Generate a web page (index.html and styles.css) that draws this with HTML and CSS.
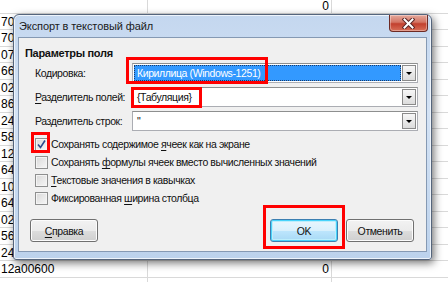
FILE: index.html
```html
<!DOCTYPE html>
<html lang="ru">
<head>
    <meta charset="UTF-8">
    <title>Экспорт в текстовый файл</title>
    <link rel="stylesheet" href="styles.css">
</head>
<body>
    <div class="sheet">
        <div class="row first"><div class="cell a"></div><div class="cell b">0</div><div class="cell c"></div></div>
        <div class="row"><div class="cell a">70a00600</div><div class="cell b"></div><div class="cell c"></div></div>
        <div class="row odd"><div class="cell a">70a00600</div><div class="cell b"></div><div class="cell c"></div></div>
        <div class="row"><div class="cell a">07a00600</div><div class="cell b"></div><div class="cell c"></div></div>
        <div class="row odd"><div class="cell a">66a00600</div><div class="cell b"></div><div class="cell c"></div></div>
        <div class="row"><div class="cell a">02a00600</div><div class="cell b"></div><div class="cell c"></div></div>
        <div class="row odd"><div class="cell a">86a00600</div><div class="cell b"></div><div class="cell c"></div></div>
        <div class="row"><div class="cell a">24a00600</div><div class="cell b"></div><div class="cell c"></div></div>
        <div class="row odd"><div class="cell a">58a00600</div><div class="cell b"></div><div class="cell c"></div></div>
        <div class="row"><div class="cell a">12a00600</div><div class="cell b"></div><div class="cell c"></div></div>
        <div class="row odd"><div class="cell a">64a00600</div><div class="cell b"></div><div class="cell c"></div></div>
        <div class="row"><div class="cell a">10a00600</div><div class="cell b"></div><div class="cell c"></div></div>
        <div class="row odd"><div class="cell a">64a00600</div><div class="cell b"></div><div class="cell c"></div></div>
        <div class="row"><div class="cell a">02a00600</div><div class="cell b"></div><div class="cell c"></div></div>
        <div class="row odd"><div class="cell a">56a00600</div><div class="cell b"></div><div class="cell c"></div></div>
        <div class="row"><div class="cell a">24a00600</div><div class="cell b"></div><div class="cell c"></div></div>
        <div class="row odd"><div class="cell a">12a00600</div><div class="cell b">0</div><div class="cell c"></div></div>
        <div class="row"><div class="cell a"></div><div class="cell b"></div><div class="cell c"></div></div>
    </div>

    <div class="dialog">
        <div class="titlebar">
            <span class="title">Экспорт в текстовый файл</span>
            <button class="close">
                <svg width="13" height="11" viewBox="0 0 13 11">
                    <path d="M2.5 1.5 L10.5 9.5 M10.5 1.5 L2.5 9.5" stroke="#5a2525" stroke-width="4" stroke-linecap="square"/>
                    <path d="M2.5 1.5 L10.5 9.5 M10.5 1.5 L2.5 9.5" stroke="#fff" stroke-width="2" stroke-linecap="square"/>
                </svg>
            </button>
        </div>
        <div class="client">
            <div class="group-title">Параметры поля</div>

            <div class="field">
                <label>Кодировка:</label>
                <div class="combo focused">
                    <span class="value">Кириллица (Windows-1251)</span>
                    <span class="drop"></span>
                </div>
            </div>
            <div class="field">
                <label><u>Р</u>азделитель полей:</label>
                <div class="combo">
                    <span class="value">{Табуляция}</span>
                    <span class="drop"></span>
                </div>
            </div>
            <div class="field">
                <label>Разделитель строк:</label>
                <div class="combo">
                    <span class="value">"</span>
                    <span class="drop"></span>
                </div>
            </div>

            <div class="checks">
                <div class="check">
                    <span class="box">
                        <svg width="11" height="11" viewBox="0 0 11 11">
                            <path d="M2 5.5 L4.5 8.5 L9 1.5" fill="none" stroke="#2e4a8c" stroke-width="1.6"/>
                        </svg>
                    </span>
                    <span>Сохранять содержимое <u>я</u>чеек как на экране</span>
                </div>
                <div class="check"><span class="box"></span><span>Сохранять <u>ф</u>ормулы ячеек вместо вычисленных значений</span></div>
                <div class="check"><span class="box"></span><span><u>Т</u>екстовые значения в кавычках</span></div>
                <div class="check"><span class="box"></span><span>Фиксированная <u>ш</u>ирина столбца</span></div>
            </div>

            <div class="buttons">
                <button class="btn"><u>С</u>правка</button>
                <span class="spacer"></span>
                <button class="btn default">OK</button>
                <button class="btn">Отменить</button>
            </div>
        </div>
    </div>

    <!-- red annotation frames -->
    <div class="mark mark-encoding"></div>
    <div class="mark mark-separator"></div>
    <div class="mark mark-check"></div>
    <div class="mark mark-ok"></div>
</body>
</html>
```

FILE: styles.css
```css
*{
    margin: 0;
    padding: 0;
    box-sizing: border-box;
}
body{
    width: 448px;
    height: 282px;
    overflow: hidden;
    position: relative;
    background: #fff;
    font-family: "Liberation Sans", Arial, sans-serif;
    font-size: 10.5px;
    letter-spacing: -0.4px;
    color: #111;
}

/* spreadsheet behind the dialog */
.sheet{
    margin-top: -3px;
    letter-spacing: 0;
}
.row{
    display: grid;
    grid-template-columns: 148px 184px 1fr;
    height: 16px;
    border-bottom: 1px solid #d9d9d9;
}
.row.odd{
    height: 17px;
}
.row.first{
    height: 17px;
}
.row.first .cell{
    padding-top: 3px;
    line-height: 13px;
}
.cell{
    border-right: 1px solid #d9d9d9;
    font-size: 12px;
    line-height: 17px;
    white-space: nowrap;
    overflow: hidden;
    padding-left: 1px;
    color: #000;
}
.cell.b{
    text-align: right;
    padding-right: 2px;
}
.cell.c{
    border-right: none;
}

/* dialog window */
.dialog{
    position: absolute;
    left: 13px;
    top: 14px;
    width: 419px;
    height: 246px;
    display: flex;
    flex-direction: column;
    padding: 0 4px 7px 4px;
    border: 1px solid #55657c;
    border-radius: 6px 6px 3px 3px;
    background: linear-gradient(180deg, #c4d7ef 0%, #d4e3f5 40%, #bcd2ec 100%);
    box-shadow: 2px 3px 8px rgba(0, 0, 0, 0.55), inset 0 0 0 1px #eef4fb;
}
.titlebar{
    height: 22px;
    display: flex;
    align-items: center;
    position: relative;
}
.title{
    padding-left: 1px;
    color: #1b1b1b;
    font-size: 11px;
    letter-spacing: -0.1px;
}
.close{
    position: absolute;
    right: -1px;
    top: 0;
    width: 39px;
    height: 17px;
    border: 1px solid #6d2a24;
    border-top: none;
    border-radius: 0 0 4px 4px;
    background: linear-gradient(180deg, #e5a99c 0%, #d47564 45%, #c2402e 55%, #d86f58 100%);
    display: flex;
    align-items: center;
    justify-content: center;
    box-shadow: inset 0 0 0 1px rgba(255, 255, 255, 0.35);
}
.client{
    flex: 1;
    background: #f0f0f0;
    border: 1px solid #8599b3;
    padding: 7px 8px 0 6px;
}
.group-title{
    font-weight: bold;
    font-size: 11px;
    letter-spacing: -0.3px;
    line-height: 16px;
    margin-bottom: 2px;
}
.field{
    display: flex;
    align-items: center;
    padding-left: 10px;
    margin-bottom: 4px;
}
.field label{
    width: 97px;
    white-space: nowrap;
}
.combo{
    flex: 1;
    height: 20px;
    border: 1px solid #abadb3;
    border-top-color: #8e8f8f;
    background: #fff;
    display: flex;
    align-items: center;
    padding: 1px;
}
.combo .value{
    flex: 1;
    height: 100%;
    padding-left: 3px;
    line-height: 16px;
    white-space: nowrap;
}
.combo.focused .value{
    background: #3399ff;
    color: #fff;
    outline: 1px dotted #1d3b66;
    outline-offset: -1px;
}
.drop{
    width: 14px;
    height: 100%;
    margin-left: 1px;
    border: 1px solid #8a8a8a;
    background: linear-gradient(180deg, #f7f7f7, #dcdcdc);
    display: flex;
    align-items: center;
    justify-content: center;
}
.drop::after{
    content: "";
    border-left: 3px solid transparent;
    border-right: 3px solid transparent;
    border-top: 3px solid #000;
}

.checks{
    margin-top: 4px;
    padding-left: 10px;
}
.check{
    height: 18px;
    display: flex;
    align-items: center;
    white-space: nowrap;
}
.check u, .field u, .btn u{
    text-underline-offset: 2px;
}
.box{
    width: 13px;
    height: 13px;
    margin-right: 3px;
    border: 1px solid #8e8f8f;
    background: linear-gradient(135deg, #d8d8d8, #f7f7f7);
    box-shadow: inset 0 0 0 1px #f4f4f4;
    display: flex;
    align-items: center;
    justify-content: center;
}

.buttons{
    display: flex;
    gap: 8px;
    margin: 12px 4px 0 5px;
}
.spacer{
    flex: 1;
}
.btn{
    width: 68px;
    height: 23px;
    border: 1px solid #707070;
    border-radius: 3px;
    background: linear-gradient(180deg, #f2f2f2 0%, #ebebeb 50%, #dddddd 51%, #cfcfcf 100%);
    box-shadow: inset 0 0 0 1px #fcfcfc;
    font-family: "Liberation Sans", Arial, sans-serif;
    font-size: 10.5px;
    letter-spacing: -0.4px;
    color: #111;
}
.btn.default{
    border-color: #3c7fb1;
    box-shadow: inset 0 0 0 1px #48d3fb, inset 0 0 0 2px #bdeefc;
    background: linear-gradient(180deg, #eaf6fd 0%, #d9f0fc 50%, #bee6fd 51%, #a7d9f5 100%);
}

/* red frames drawn over the screenshot */
.mark{
    position: absolute;
    border: 3px solid #f00;
}
.mark-encoding{
    left: 126px;
    top: 57px;
    width: 142px;
    height: 27px;
}
.mark-separator{
    left: 131px;
    top: 87px;
    width: 71px;
    height: 21px;
}
.mark-check{
    left: 31px;
    top: 132px;
    width: 19px;
    height: 21px;
}
.mark-ok{
    left: 263px;
    top: 205px;
    width: 82px;
    height: 44px;
}
```
